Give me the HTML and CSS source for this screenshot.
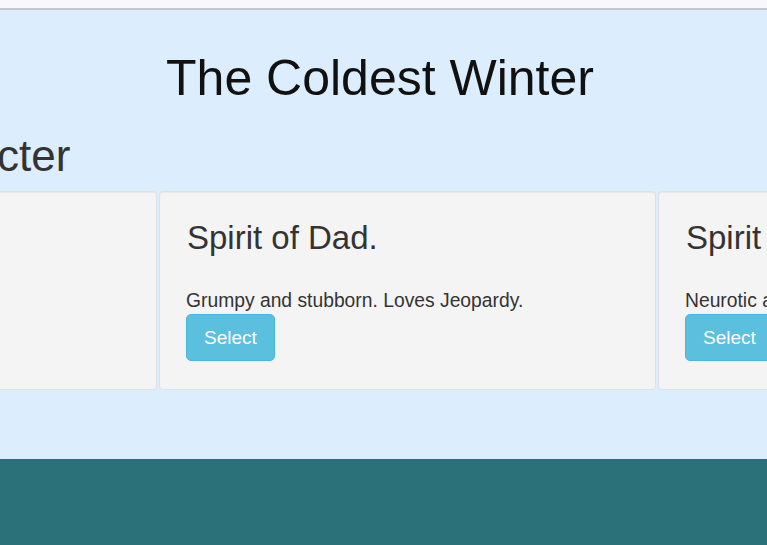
FILE: index.html
```html
<!DOCTYPE html>
<html lang="en">
<head>
<meta charset="utf-8">
<title>The Coldest Winter</title>
<link rel="stylesheet" href="styles.css">
</head>
<body>
<div class="topbar"></div>
<main class="stage">
  <h1 class="title">The Coldest Winter</h1>
  <section class="picker">
    <h2 class="picker-heading">Choose Your Character</h2>
    <div class="cards">
      <div class="card">
        <h3 class="card-title">Spirit of Mom.</h3>
        <p class="card-text">Kind and patient. Bakes pies.</p>
        <button class="btn">Select</button>
      </div>
      <div class="card">
        <h3 class="card-title">Spirit of Dad.</h3>
        <p class="card-text">Grumpy and stubborn. Loves Jeopardy.</p>
        <button class="btn">Select</button>
      </div>
      <div class="card">
        <h3 class="card-title">Spirit of Sister.</h3>
        <p class="card-text">Neurotic and anxious. Always cold.</p>
        <button class="btn">Select</button>
      </div>
    </div>
  </section>
</main>
<footer class="footer"></footer>
</body>
</html>
```

FILE: styles.css
```css
html, body {
  margin: 0;
  padding: 0;
  overflow: hidden;
  width: 767px;
  height: 545px;
  font-family: "Liberation Sans", Arial, sans-serif;
}
.topbar {
  height: 8px;
  background: #f8f7fb;
  border-bottom: 2px solid #c3c6cc;
}
.stage {
  background: #dcedfd;
  height: 448px;
  overflow: hidden;
  padding-top: 1px;
}
.title {
  margin: 40px 0 0;
  font-size: 50px;
  font-weight: 400;
  line-height: 1.1;
  color: #111;
  text-align: center;
  padding-right: 7px;
}
.picker {
  margin-left: -340px;
  width: 1600px;
}
.picker-heading {
  margin: 26px 0 0 -47px;
  font-size: 44px;
  font-weight: 400;
  line-height: 1.1;
  color: #333;
}
.cards {
  display: flex;
  gap: 2px;
  margin-top: 11px;
}
.card {
  width: 497px;
  box-sizing: border-box;
  background: #f4f4f4;
  border: 1px solid #e1e1e1;
  border-radius: 4px;
  box-shadow: inset 0 1px 1px rgba(0,0,0,.05);
  padding: 28px 27px 28px 26px;
  flex: none;
}
.card-title {
  margin: 0 0 0 1px;
  font-size: 33px;
  font-weight: 400;
  line-height: 1.1;
  color: #333;
}
.card-text {
  margin: 30px 0 0;
  font-size: 19.3px;
  line-height: 27px;
  color: #333;
}
.btn {
  display: block;
  font-family: inherit;
  font-size: 19px;
  line-height: 25px;
  padding: 10px 17px;
  color: #fff;
  background: #5bc0de;
  border: 1px solid #46b8da;
  border-radius: 5px;
}
.footer {
  height: 100px;
  background: #2b7179;
}
```
